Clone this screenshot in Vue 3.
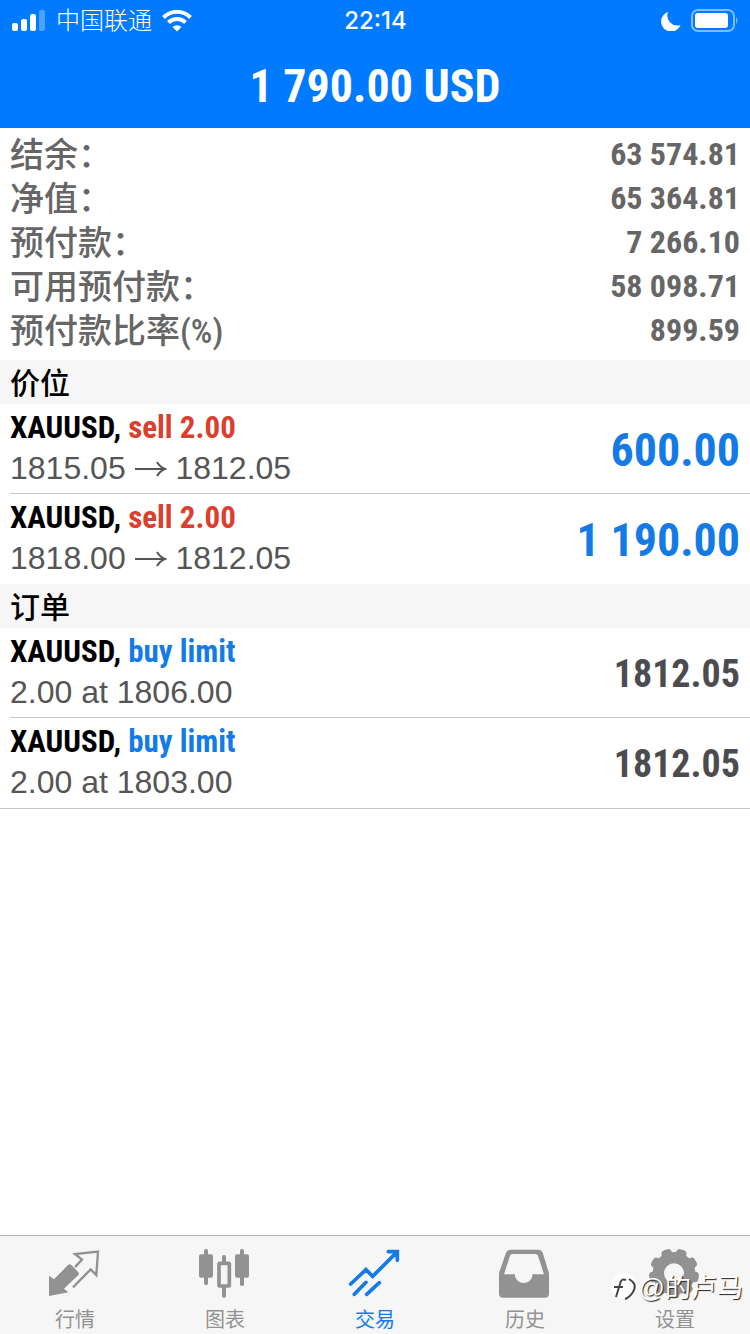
<script setup>
  import { ref } from 'vue';

  const activeTab = ref('trade')

  const summary = [
    { label: '结余：', value: '63 574.81' },
    { label: '净值：', value: '65 364.81' },
    { label: '预付款：', value: '7 266.10' },
    { label: '可用预付款：', value: '58 098.71' },
    { label: '预付款比率(%)', value: '899.59' }
  ]
  const positions = [
    { id: 1, symbol: 'XAUUSD', action: 'sell 2.00', from: '1815.05', to: '1812.05', profit: '600.00' },
    { id: 2, symbol: 'XAUUSD', action: 'sell 2.00', from: '1818.00', to: '1812.05', profit: '1 190.00' }
  ]
  const orders = [
    { id: 3, symbol: 'XAUUSD', action: 'buy limit', info: '2.00 at 1806.00', price: '1812.05' },
    { id: 4, symbol: 'XAUUSD', action: 'buy limit', info: '2.00 at 1803.00', price: '1812.05' }
  ]
  const tabs = [
    { id: 'quotes', label: '行情' },
    { id: 'chart', label: '图表' },
    { id: 'trade', label: '交易' },
    { id: 'history', label: '历史' },
    { id: 'settings', label: '设置' }
  ]
  const teeth = [10, 50, 90, 130, 170, 210, 250, 290, 330]
</script>

<template>
  <div class="app" lang="zh-CN">
    <header>
      <div class="status">
        <div class="carrier">
          <svg class="signal" viewBox="0 0 34 22">
            <rect x="0" y="13" width="6" height="8" rx="2" />
            <rect x="9" y="9" width="6" height="12" rx="2" />
            <rect x="18" y="4" width="6" height="17" rx="2" />
            <rect x="27" y="0" width="6" height="21" rx="2" opacity="0.3" />
          </svg>
          <span>中国联通</span>
          <svg class="wifi" viewBox="0 0 30 22">
            <path d="M1.5 7.5a19 19 0 0 1 27 0" />
            <path d="M6.5 12.5a12 12 0 0 1 17 0" />
            <path class="dot" d="M15 21.500l-4.500-4.500a6.500 6.500 0 0 1 9 0z" />
          </svg>
        </div>
        <time>22:14</time>
        <div class="power">
          <svg class="moon" viewBox="0 0 20 20">
            <path d="M7 1a10 10 0 1 0 12.500 13a10 10 0 0 1-12.500-13z" />
          </svg>
          <svg class="battery" viewBox="0 0 48 24">
            <rect class="shell" x="1" y="1" width="42" height="21" rx="6" />
            <rect x="4" y="4" width="33" height="15" rx="3" />
            <path d="M45 8q3 3.500 0 7z" opacity="0.5" />
          </svg>
        </div>
      </div>
      <h1>1 790.00 USD</h1>
    </header>

    <main>
      <dl class="summary">
        <div v-for="item in summary" :key="item.label">
          <dt>{{ item.label }}</dt>
          <dd>{{ item.value }}</dd>
        </div>
      </dl>

      <h2>价位</h2>
      <ul>
        <li v-for="item in positions" :key="item.id">
          <div>
            <p class="name">{{ item.symbol }}, <span class="sell">{{ item.action }}</span></p>
            <p class="info">
              {{ item.from }}
              <svg class="arrow" viewBox="0 0 32 20"><path d="M0 10h30M22 3q3 5 8 7q-5 2-8 7" /></svg>
              {{ item.to }}
            </p>
          </div>
          <p class="profit">{{ item.profit }}</p>
        </li>
      </ul>

      <h2>订单</h2>
      <ul class="orders">
        <li v-for="item in orders" :key="item.id">
          <div>
            <p class="name">{{ item.symbol }}, <span class="buy">{{ item.action }}</span></p>
            <p class="info">{{ item.info }}</p>
          </div>
          <p class="price">{{ item.price }}</p>
        </li>
      </ul>
    </main>

    <nav>
      <button
      v-for="tab in tabs"
      :key="tab.id"
      :class="{active: activeTab === tab.id}"
      @click="activeTab = tab.id"
      >
        <svg v-if="tab.id === 'quotes'" viewBox="0 0 150 150">
          <path d="M-3 80L12 91L54 48Q59 44 64 48L85 70Q88 74 85 78L42 119L55 130L-3 141z" />
          <path class="line thin" d="M77 52L96 32L75 15L144 8L139 78L122 61L71 113" />
        </svg>
        <svg v-else-if="tab.id === 'chart'" viewBox="0 0 150 150">
          <rect x="-3" y="16" width="42" height="70" rx="6" />
          <rect x="12" y="0" width="12" height="108" rx="5" />
          <rect class="line" x="57" y="43" width="31" height="68" rx="2" />
          <rect x="66" y="18" width="12" height="24" rx="5" />
          <rect x="66" y="112" width="12" height="34" rx="5" />
          <rect x="105" y="16" width="42" height="70" rx="6" />
          <rect x="120" y="0" width="12" height="111" rx="5" />
        </svg>
        <svg v-else-if="tab.id === 'trade'" viewBox="0 0 150 150">
          <path class="line" d="M2 105L48 62L68 82L140 10M115 8H142V34M13 136L48 100M50 136L88 101" />
        </svg>
        <svg v-else-if="tab.id === 'history'" viewBox="0 0 150 150">
          <path fill-rule="evenodd" d="M32 2H114Q124 2 128 11L145 66Q147 71 147 77V134Q147 146 135 146H9Q-3 146 -3 134V77Q-3 71 -1 66L18 11Q22 2 32 2zM38 15Q32 15 30 20L12 76H45V82A27 27 0 0 0 97 82V76H132L114 20Q112 15 107 15z" />
        </svg>
        <svg v-else viewBox="0 0 150 150">
          <circle class="gear" cx="72" cy="73" r="47" />
          <rect v-for="angle in teeth" :key="angle" x="112" y="57" width="35" height="32" rx="12" :transform="`rotate(${angle} 72 73)`" />
        </svg>
        <span>{{ tab.label }}</span>
      </button>
      <div class="watermark">
        <svg viewBox="0 0 28 30">
          <circle cx="13" cy="13" r="13" fill="#fff" />
          <path d="M15 7q-5-2-6 4l-4 13M3 14h9M18 6q9 5 4 13q-3 5-8 7" />
        </svg>
        <span>@的卢马</span>
      </div>
    </nav>
  </div>
</template>

<style>
body{
  background: white;
}
</style>

<style scoped>
*{
  margin: 0;
  padding: 0;
  box-sizing: border-box;
}
.app{
  min-height: 100vh;
  display: flex;
  flex-direction: column;
  font-family: "Liberation Sans", "Noto Sans CJK SC", sans-serif;
}
header{
  background: #007aff;
  color: white;
}
.status{
  height: 40px;
  padding: 0 11px 0 12px;
  display: grid;
  grid-template-columns: 1fr auto 1fr;
  align-items: center;
  font-family: Inter, "Noto Sans CJK SC", sans-serif;
  font-size: 24px;
  line-height: 42px;
}
.status svg{
  fill: white;
}
.status time{
  font-weight: 500;
}
.carrier, .power{
  display: flex;
  align-items: center;
  gap: 10px;
  font-weight: 300;
}
.power{
  justify-content: flex-end;
}
.signal{
  width: 34px;
  height: 22px;
}
.status .wifi{
  width: 30px;
  height: 22px;
  fill: none;
  stroke: white;
  stroke-width: 4;
}
.wifi .dot{
  fill: white;
  stroke: none;
}
.moon{
  width: 20px;
  height: 20px;
}
.battery{
  width: 48px;
  height: 24px;
}
.battery .shell{
  fill: none;
  stroke: #7fbcff;
  stroke-width: 2;
}
h1{
  height: 88px;
  line-height: 92px;
  text-align: center;
  font-family: "Roboto Condensed", Roboto, sans-serif;
  font-size: 46px;
}
main{
  flex: 1;
}
.summary{
  padding: 4px 10px 8px;
  color: #666;
}
.summary div{
  display: flex;
  justify-content: space-between;
  height: 44px;
  line-height: 44px;
}
dt{
  font-family: "Roboto Condensed", Roboto, "Noto Sans CJK SC", sans-serif;
  font-size: 34px;
  line-height: 46px;
  font-weight: 500;
}
dd, .name, .profit, .price{
  font-family: "Roboto Condensed", Roboto, sans-serif;
  font-weight: bold;
}
dd{
  font-size: 32px;
}
h2{
  height: 44px;
  line-height: 42px;
  padding: 0 10px;
  background: #f6f6f6;
  font-family: "Noto Sans CJK SC", sans-serif;
  font-size: 30px;
  font-weight: 500;
}
ul{
  list-style: none;
  padding-left: 10px;
}
li{
  height: 90px;
  padding: 2px 10px 4px 0;
  display: flex;
  justify-content: space-between;
  align-items: center;
}
li + li{
  box-shadow: 0 -1px #c8c7cc;
}
.orders{
  border-bottom: 1px solid #c8c7cc;
}
.name{
  font-size: 31px;
  line-height: 41px;
}
.sell{
  color: #d9402f;
}
.buy{
  color: #147be6;
}
.info{
  font-size: 32px;
  line-height: 41px;
  color: #555;
}
.arrow{
  width: 32px;
  height: 20px;
  fill: none;
  stroke: #555;
  stroke-width: 2;
}
.profit, .price{
  padding-top: 4px;
}
.profit{
  font-size: 46px;
  color: #147be6;
}
.price{
  font-size: 38px;
  color: #4c4c50;
}
nav{
  position: relative;
  height: 99px;
  display: flex;
  background: #f6f6f6;
  border-top: 1px solid #b2b2b2;
}
nav button{
  flex: 1;
  display: flex;
  flex-direction: column;
  align-items: center;
  gap: 6px;
  padding-top: 13px;
  border: none;
  background: none;
  color: #929292;
  font-family: "Liberation Sans", "Noto Sans CJK SC", sans-serif;
  font-size: 20px;
  line-height: 30px;
  cursor: pointer;
}
nav button svg{
  width: 50px;
  height: 50px;
  overflow: visible;
  fill: currentColor;
}
nav .active{
  color: #147be6;
}
.line{
  fill: none;
  stroke: currentColor;
  stroke-width: 11;
  stroke-linecap: round;
}
.line.thin{
  stroke-width: 7;
}
.gear{
  fill: none;
  stroke: currentColor;
  stroke-width: 34;
}
.watermark{
  position: absolute;
  right: 7px;
  top: 32px;
  display: flex;
  align-items: center;
  color: white;
  font-family: "Liberation Sans", "Noto Sans CJK SC", sans-serif;
  font-size: 26px;
  line-height: 40px;
  text-shadow: 1px 1px 1px #222;
  pointer-events: none;
}
.watermark svg{
  width: 28px;
  height: 30px;
}
.watermark path{
  fill: none;
  stroke: #444;
  stroke-width: 2;
}
</style>
